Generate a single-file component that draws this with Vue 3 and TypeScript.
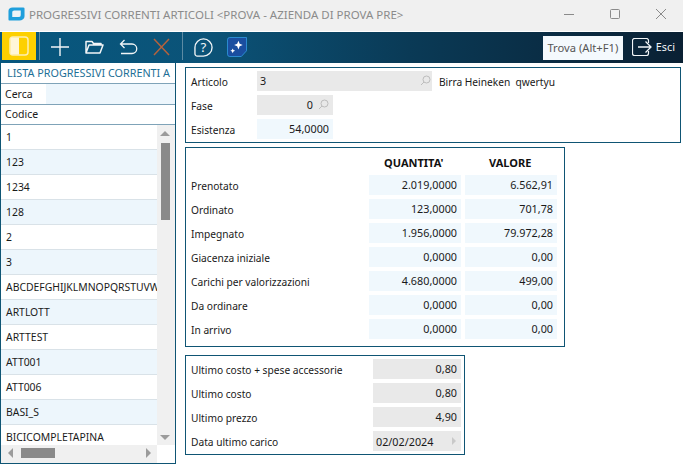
<script setup lang="ts">
const items: string[] = ['1','123','1234','128','2','3','ABCDEFGHIJKLMNOPQRSTUVWXYZ','ARTLOTT','ARTTEST','ATT001','ATT006','BASI_S','BICICOMPLETAPINA']
const rows: [string,string,string][] = [
  ['Prenotato','2.019,0000','6.562,91'],['Ordinato','123,0000','701,78'],['Impegnato','1.956,0000','79.972,28'],
  ['Giacenza iniziale','0,0000','0,00'],['Carichi per valorizzazioni','4.680,0000','499,00'],['Da ordinare','0,0000','0,00'],['In arrivo','0,0000','0,00']
]
const costs: [string,string][] = [['Ultimo costo + spese accessorie','0,80'],['Ultimo costo','0,80'],['Ultimo prezzo','4,90']]
</script>

<template>
  <div class="win">
    <header class="title">
      <svg class="logo" width="17" height="14" viewBox="0 0 18 18" preserveAspectRatio="none"><path d="M5 .5h11a1.500 1.500 0 0 1 1.500 1.500v10a5.500 5.500 0 0 1-5.500 5.500H2A1.500 1.500 0 0 1 .5 16V5A4.500 4.500 0 0 1 5 .5z" fill="#1f9fdc"/><path d="M6.500 4.500h7v6a2.500 2.500 0 0 1-2.500 2.500H4.500V6.500a2 2 0 0 1 2-2z" fill="#eef3f6"/></svg>
      <span class="ttext">PROGRESSIVI CORRENTI ARTICOLI &lt;PROVA - AZIENDA DI PROVA PRE&gt;</span>
      <div class="winbtns">
        <svg width="12" height="12" viewBox="0 0 12 12"><path d="M1 6.500h10" stroke="#8a8a8a" fill="none"/></svg>
        <svg width="12" height="12" viewBox="0 0 12 12"><rect x="1.500" y="1.500" width="9" height="9" rx="1" stroke="#8a8a8a" fill="none"/></svg>
        <svg width="12" height="12" viewBox="0 0 12 12"><path d="M1 1l10 10M11 1L1 11" stroke="#8a8a8a" fill="none"/></svg>
      </div>
    </header>
    <nav class="tool">
      <div class="sel"><svg width="20" height="20" viewBox="0 0 20 20"><rect x="1" y="1" width="18" height="18" rx="3" fill="none" stroke="#fdeeb0" stroke-width="1.500"/><path d="M3.500 1.500H10v17H3.500a2 2 0 0 1-2-2v-13a2 2 0 0 1 2-2z" fill="#fff6d8"/></svg></div>
      <i class="sep first"></i>
      <svg class="ic plus" width="18" height="18" viewBox="0 0 18 18"><path d="M9 0v18M0 9h18" stroke="#f2f5f7" stroke-width="1.400" fill="none"/></svg>
      <svg class="ic folder" width="19" height="14" viewBox="0 0 19 14"><path d="M1 13V1.500h6l1.500 2H16V5M1 13h14l3-8H4L1 13z" stroke="#f2f5f7" stroke-width="1.500" fill="none" stroke-linejoin="round"/></svg>
      <svg class="ic back" width="19" height="16" viewBox="0 0 19 16"><path d="M5.500 1L1.500 5l4 4M1.500 5H13a4.500 4.500 0 0 1 0 9.500H2" stroke="#f2f5f7" stroke-width="1.300" fill="none"/></svg>
      <svg class="ic del" width="17" height="18" viewBox="0 0 17 18"><path d="M1 1l15 16M16 1L1 17" stroke="#b5623c" stroke-width="1.500" fill="none"/></svg>
      <i class="sep second"></i>
      <svg class="ic help" width="19" height="19" viewBox="0 0 20 20"><path d="M10 1a9 9 0 0 1 9 9v0a9 9 0 0 1-9 9H3.500A2.500 2.500 0 0 1 1 16.500V10a9 9 0 0 1 9-9z" stroke="#f2f5f7" stroke-width="1.400" fill="none"/><text x="10" y="15" class="q">?</text></svg>
      <svg class="ic ai" width="20" height="20" viewBox="0 0 21 21"><path d="M3 .5h17.500v14l-5.500 6H3A2.500 2.500 0 0 1 .5 18V3A2.500 2.500 0 0 1 3 .5z" fill="#1a4ea0" stroke="#2d8fd6"/><path d="M12 4l1.300 3.200L16.500 8.500l-3.200 1.300L12 13l-1.300-3.200L7.500 8.500l3.200-1.300zM6 12l.8 1.700 1.700.8-1.700.8L6 17l-.8-1.700-1.700-.8 1.700-.8z" fill="#fff"/></svg>
      <div class="spacer"></div>
      <div class="find">Trova (Alt+F1)</div>
      <svg class="ic exit" width="20" height="18" viewBox="0 0 20 18"><path d="M16.500 5V2.500a2 2 0 0 0-2-2h-12a2 2 0 0 0-2 2v13a2 2 0 0 0 2 2h12a2 2 0 0 0 2-2V13" stroke="#f2f5f7" stroke-width="1.200" fill="none"/><path d="M6 9h13M13.500 3.500L19 9l-5.500 5.500" stroke="#f2f5f7" stroke-width="1.300" fill="none"/></svg>
      <span class="esci">Esci</span>
    </nav>
    <main class="body">
      <aside class="list">
        <div class="ltitle">LISTA PROGRESSIVI CORRENTI A</div>
        <div class="cerca"><span>Cerca</span><b></b></div>
        <div class="codice">Codice</div>
        <div class="lbody">
          <div class="rows">
            <div v-for="(it,i) in items" :key="it" class="row" :class="{alt:i%2===1}"><span>{{ it }}</span></div>
          </div>
          <div class="vbar">
            <i class="up"></i><b class="thumb"></b><i class="down"></i>
          </div>
          <div class="hbar">
            <i class="left"></i><b class="hthumb"></b><i class="right"></i>
          </div>
        </div>
      </aside>
      <section class="content">
        <div class="panel p1">
          <div class="fr"><label>Articolo</label><div class="f grey art">3<svg class="lens" width="11" height="11" viewBox="0 0 11 11"><circle cx="6.500" cy="4.500" r="3.500" fill="none" stroke="#bdbdbd"/><path d="M4 7L1 10" stroke="#bdbdbd"/></svg></div><span class="desc">Birra Heineken&nbsp; qwertyu</span></div>
          <div class="fr"><label>Fase</label><div class="f grey fase">0<svg class="lens" width="11" height="11" viewBox="0 0 11 11"><circle cx="6.500" cy="4.500" r="3.500" fill="none" stroke="#bdbdbd"/><path d="M4 7L1 10" stroke="#bdbdbd"/></svg></div></div>
          <div class="fr"><label>Esistenza</label><div class="f blue esi">54,0000</div></div>
        </div>
        <div class="panel p2">
          <div class="hd"><span>QUANTITA'</span><span>VALORE</span></div>
          <div v-for="r in rows" :key="r[0]" class="tr">
            <label>{{ r[0] }}</label><div class="f blue q1">{{ r[1] }}</div><div class="f blue q2">{{ r[2] }}</div>
          </div>
        </div>
        <div class="panel p3">
          <div v-for="c in costs" :key="c[0]" class="cr"><label>{{ c[0] }}</label><div class="f grey c1">{{ c[1] }}</div></div>
          <div class="cr"><label>Data ultimo carico</label><div class="f grey c1 date"><span>02/02/2024</span><i class="tri"></i></div></div>
        </div>
      </section>
    </main>
  </div>
</template>

<style>
html,body{margin:0;padding:0;background:#fff;overflow:hidden}
</style>
<style scoped>
.win{width:683px;height:464px;overflow:hidden;background:#fff;font-family:"Noto Sans","Open Sans",sans-serif;font-size:10.800px;color:#1a1a1a;display:flex;flex-direction:column}
.title{height:32px;flex:none;background:linear-gradient(#f0f0f0 31px,#fff 31px);display:flex;align-items:center;box-sizing:border-box;padding:0 0 4px 8px}
.logo{margin-right:4px}
.ttext{font-size:11.500px;color:#8b8b8b;white-space:nowrap}
.winbtns{margin-left:auto;display:flex;gap:34px;padding-right:16px}
.tool{height:31px;flex:none;background:linear-gradient(90deg,#07577e 0%,#0b5378 30%,#0a3a56 60%,#0a2033 100%);display:flex;align-items:center}
.sel{width:34px;height:28px;margin-left:2px;background:#fdd000;display:flex;align-items:center;justify-content:center;align-self:flex-start}
.sep{width:1px;height:28px;background:#5d8ba3;display:block;flex:none;align-self:flex-start}
.sep.first{margin-left:3px}
.ic{flex:none;display:block}
.plus{margin-left:11px;margin-top:-2px}
.folder{margin-left:16px;margin-top:-1px}
.back{margin-left:15px;margin-top:-2px}
.del{margin-left:15px;margin-top:-2px}
.sep.second{margin-left:12px}
.help{margin-left:11px;margin-top:-1px}
.q{font-size:14px;fill:#f2f5f7;text-anchor:middle;font-family:"Noto Sans",sans-serif}
.ai{margin-left:14px;margin-top:-1px}
.spacer{flex:1}
.find{width:80px;height:24px;background:#f4f9fd;color:#555;font-size:11.200px;line-height:23px;text-align:center;white-space:nowrap}
.exit{margin-left:9px;margin-top:-1px}
.esci{color:#f2f5f7;font-size:10.800px;margin-left:4px;margin-right:8px;margin-top:-3px}
.body{flex:1;display:flex;min-height:0}
.list{width:176px;height:401px;box-sizing:border-box;border:1px solid #0f5574;border-top:none;flex:none;display:flex;flex-direction:column;overflow:hidden}
.ltitle{height:21px;line-height:20px;padding-left:6px;color:#1d6f96;font-size:10.800px;white-space:nowrap;overflow:hidden;border-bottom:1px solid #7fa3b8;flex:none;box-sizing:border-box}
.cerca{height:21px;flex:none;display:flex;align-items:center;border-bottom:1px solid #7fa3b8;box-sizing:border-box;background:#edf6fc}
.cerca span{width:45px;padding-left:4px;height:100%;line-height:20px;background:#fff;box-sizing:border-box;font-size:10.500px}
.codice{height:20px;line-height:18px;padding-left:4px;border-bottom:1px solid #7fa3b8;flex:none;box-sizing:border-box;font-size:10.500px}
.lbody{flex:1;position:relative;overflow:hidden;min-height:0}
.rows{width:156px;height:320px;overflow:hidden}
.row{height:25px;box-sizing:border-box;border-bottom:1px solid #d9e2e8;padding-left:5px;line-height:24px;font-size:10.400px;white-space:nowrap;overflow:hidden}
.row.alt{background:#edf6fc}
.vbar{position:absolute;left:156px;top:0;width:18px;height:320px;background:#f0f0f0}
.thumb{position:absolute;left:4px;top:18px;width:9px;height:77px;background:#8a8a8a}
.up,.down,.left,.right{position:absolute;width:0;height:0}
.up{left:3px;top:6px;border:5px solid transparent;border-top:none;border-bottom:5px solid #9b9b9b}
.down{left:3px;top:310px;border:5px solid transparent;border-bottom:none;border-top:5px solid #9b9b9b}
.hbar{position:absolute;left:0;top:320px;width:156px;height:18px;background:#f0f0f0}
.hthumb{position:absolute;left:20px;top:3px;width:34px;height:10px;background:#8a8a8a}
.left{left:7px;top:3px;border:5px solid transparent;border-left:none;border-right:5px solid #9b9b9b}
.right{left:145px;top:3px;border:5px solid transparent;border-right:none;border-left:5px solid #9b9b9b}
.content{flex:1;padding:4px 0 0 9px;min-width:0}
.panel{box-sizing:border-box;border:1px solid #0f5574}
.p1{width:496px;height:76px;padding:3px 0 0 5px;display:flex;flex-direction:column;gap:4px}
.fr{display:flex;align-items:center;height:20px}
label,.desc{display:block;white-space:nowrap;font-size:10.200px;padding-top:1px}
.fr label{width:66px}
.f{height:20px;line-height:19px;box-sizing:border-box;white-space:nowrap}
.grey{background:#e9e9e9}
.blue{background:#f0f8fd}
.art{width:175px;padding-left:3px;position:relative}
.lens{position:absolute;right:1px;top:4px}
.fase{width:76px;text-align:right;padding-right:20px;position:relative}
.fase .lens{right:4px}
.esi{width:76px;text-align:right;padding-right:4px}
.desc{margin-left:7px}
.p2{width:380px;height:200px;margin-top:4px;padding:5px 0 0 5px}
.hd{height:22px;display:flex;font-weight:700;line-height:19px;color:#111;font-size:11px}
.hd span:first-child{margin-left:193px;width:105px}
.tr{display:flex;align-items:center;height:20px;margin-bottom:4px}
.tr label{width:178px}
.q1{width:92px;text-align:right;padding-right:4px;margin-right:4px}
.q2{width:92px;text-align:right;padding-right:4px}
.p3{width:280px;height:100px;margin-top:8px;padding:3px 0 0 5px;display:flex;flex-direction:column;gap:4px}
.cr{display:flex;align-items:center;height:20px}
.cr label{width:182px}
.c1{width:88px;text-align:right;padding-right:4px}
.date{display:flex;justify-content:space-between;align-items:center;text-align:left;padding-left:3px;padding-right:5px}
.tri{width:0;height:0;border:4px solid transparent;border-right:none;border-left:4px solid #c9c9c9}
</style>
